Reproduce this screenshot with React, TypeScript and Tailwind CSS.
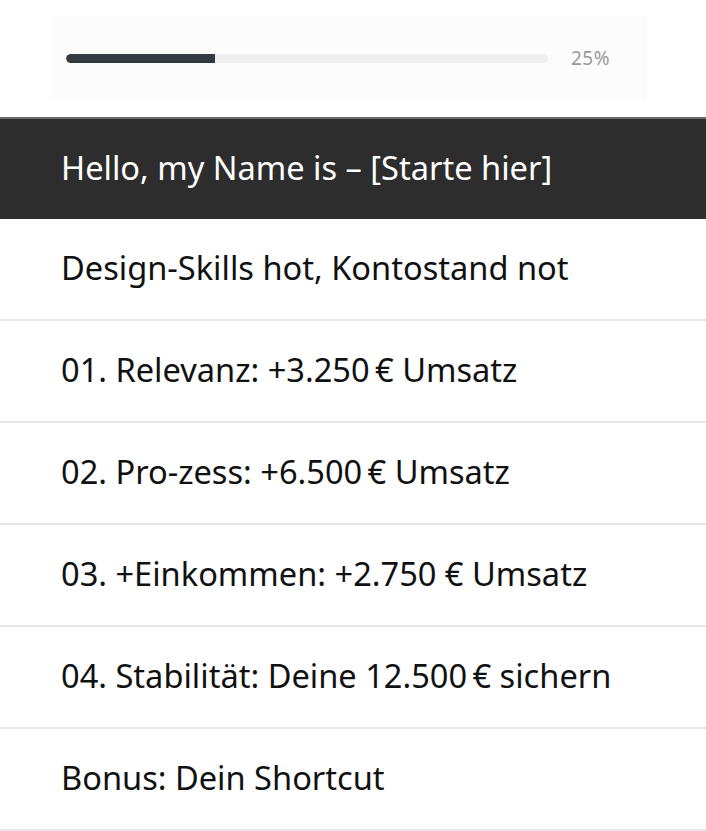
import React from "react";

const rows = [
  "Design-Skills hot, Kontostand not",
  "01. Relevanz: +3.250\u202F€ Umsatz",
  "02. Pro-zess: +6.500\u202F€ Umsatz",
  "03. +Einkommen: +2.750 € Umsatz",
  "04. Stabilität: Deine 12.500\u202F€ sichern",
  "Bonus: Dein Shortcut",
];

export default function App() {
  return (
    <div className="w-[706px] h-[831px] bg-white overflow-hidden" style={{ fontFamily: '"Noto Sans", sans-serif' }}>
      <div className="pt-[16px] pl-[50px] pr-[59px] pb-[16px]">
        <div className="h-[85px] bg-[#fcfcfc] flex items-center pl-[16px] pr-[37px]">
          <div className="flex-1 h-[9px] rounded-full bg-[#efefef] overflow-hidden">
            <div className="h-full w-[31%] bg-[#343a40] rounded-l-full" />
          </div>
          <span className="ml-[23px] text-[19px] leading-none text-[#9a9a9a] tracking-[0.5px]">25%</span>
        </div>
      </div>
      <div className="border-t-2 border-[#6a6a6a] bg-[#2d2d2d] h-[102px] flex items-center pl-[61px]">
        <span className="text-white text-[32.6px] leading-none -mt-[2px]">Hello, my Name is – [Starte hier]</span>
      </div>
      {rows.map((r) => (
        <div key={r} className="h-[102px] border-b-2 border-[#e6e6e6] flex items-center pl-[61px]">
          <span className="text-[#111111] text-[32.6px] leading-none -mt-[2px]">{r}</span>
        </div>
      ))}
    </div>
  );
}
